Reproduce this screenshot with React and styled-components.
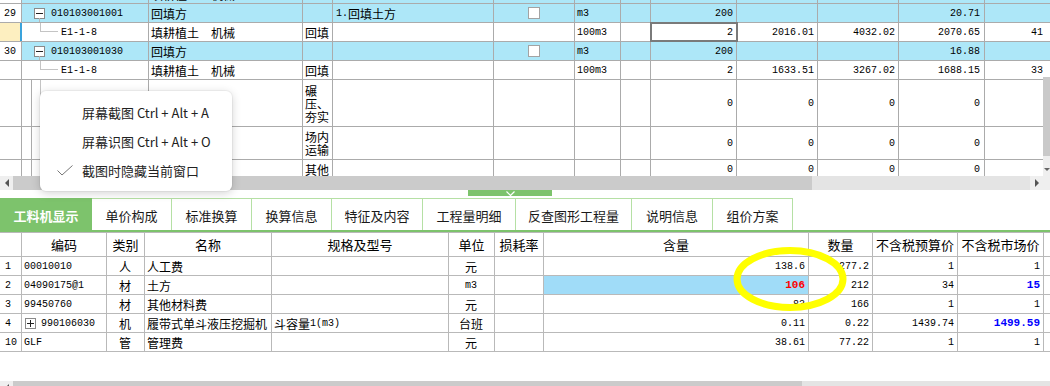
import React from "react";
import styled, { createGlobalStyle, css } from "styled-components";

const CJK = `"Noto Sans CJK SC", "Liberation Sans", sans-serif`;
const MONO = `"Liberation Mono", "Noto Sans CJK SC", monospace`;

const GlobalStyle = createGlobalStyle`
  *, *::before, *::after { box-sizing: border-box; }
  html, body { margin: 0; padding: 0; background: #fff; }
  body { font-family: ${CJK}; }
`;

// last two tracks: the visible slice of the clipped column, then the strip under the scrollbar
const TOP_COLS = "22px 127px 154px 30px 161px 81px 46px 30px 86px 81px 81px 86px 58px 1fr";
const BOTTOM_COLS = "22px 85px 38px 127px 177px 46px 49px 265px 64px 85px 86px 1fr";
const TOP_LINE = "#ababab";
const BOTTOM_LINE = "#b9b9b9";

const topRows = [
  { partial: true, blue: true, name: "填耕植土　机械" },
  { blue: true, no: "29", parent: true, code: "010103001001", name: "回填方", feature: true, check: true, unit: "m3", qty: "200", p3: "20.71" },
  { selected: true, child: true, code: "E1-1-8", name: "填耕植土　机械", kind: "回填", unit: "100m3", qty: "2", focus: true, p1: "2016.01", p2: "4032.02", p3: "2070.65", p4: "4141.30" },
  { blue: true, no: "30", parent: true, code: "010103001030", name: "回填方", check: true, unit: "m3", qty: "200", p3: "16.88" },
  { child: true, code: "E1-1-8", name: "填耕植土　机械", kind: "回填", unit: "100m3", qty: "2", p1: "1633.51", p2: "3267.02", p3: "1688.15", p4: "3376.30" },
  { h: 47, guide: true, kind: ["碾", "压、", "夯实"], qty: "0", p1: "0", p2: "0", p3: "0" },
  { h: 33, guide: true, kind: ["场内", "运输"], qty: "0", p1: "0", p2: "0", p3: "0" },
  { h: 20, guide: true, kind: ["其他"], qty: "0", p1: "0", p2: "0", p3: "0" },
];

const tabs = [
  { label: "工料机显示", w: 92, active: true },
  { label: "单价构成", w: 80 },
  { label: "标准换算", w: 80 },
  { label: "换算信息", w: 80 },
  { label: "特征及内容", w: 91 },
  { label: "工程量明细", w: 93 },
  { label: "反查图形工程量", w: 116 },
  { label: "说明信息", w: 81 },
  { label: "组价方案", w: 80 },
];

const headers = ["", "编码", "类别", "名称", "规格及型号", "单位", "损耗率", "含量", "数量", "不含税预算价", "不含税市场价", ""];

const materials = [
  { no: "1", code: "00010010", type: "人", name: "人工费", unit: "元", qty: "138.6", total: "277.2", budget: "1", market: "1" },
  { no: "2", code: "04090175@1", type: "材", name: "土方", unit: "m3", qty: "106", hot: true, total: "212", budget: "34", market: "15", marketBold: true },
  { no: "3", code: "99450760", type: "材", name: "其他材料费", unit: "元", qty: "83", total: "166", budget: "1", market: "1" },
  { no: "4", code: "990106030", expand: true, type: "机", name: "履带式单斗液压挖掘机", spec: "斗容量", specNum: "1(m3)", unit: "台班", qty: "0.11", total: "0.22", budget: "1439.74", market: "1499.59", marketBold: true },
  { no: "10", code: "GLF", type: "管", name: "管理费", unit: "元", qty: "38.61", total: "77.22", budget: "1", market: "1" },
];

const Screen = styled.div`
  position: relative;
  width: 1050px;
  height: 386px;
  overflow: hidden;
  background: #fff;
  font-family: ${CJK};
  font-size: 12px;
  color: #000;
  display: flex;
  flex-direction: column;
`;

const GridViewport = styled.div`
  position: relative;
  flex: none;
  height: 176px;
  overflow: hidden;
`;

const GridBody = styled.div`
  margin-top: -15px;
`;

const GridRow = styled.div`
  flex: none;
  display: grid;
  grid-template-columns: ${(p) => p.$cols};
  height: ${(p) => p.$h || 19}px;
  border-bottom: 1px solid ${(p) => p.$line};
  background: ${(p) => (p.$blue ? "#ade7f8" : "#fff")};
`;

const Cell = styled.div`
  display: flex;
  align-items: center;
  justify-content: ${(p) => ({ right: "flex-end", center: "center" }[p.$align] || "flex-start")};
  padding: 0 ${(p) => p.$pr ?? 3}px 0 ${(p) => p.$pl ?? 2}px;
  border-right: ${(p) => (p.$line ? `1px solid ${p.$line}` : "none")};
  background: ${(p) => p.$bg || "transparent"};
  white-space: nowrap;
  overflow: hidden;
  min-width: 0;
  ${(p) =>
    p.$focus &&
    css`
      position: relative;
      z-index: 1;
      outline: 2px solid #7a7a7a;
      outline-offset: -1px;
      overflow: visible;
    `}
  ${(p) =>
    p.$marker &&
    css`
      border-right-color: #3aa3dc;
      box-shadow: inset -1px 0 0 #3aa3dc;
    `}
`;

const Mono = styled.span`
  font-family: ${MONO};
  font-size: ${(p) => (p.$bold ? 11 : 10)}px;
  font-weight: ${(p) => (p.$bold ? "bold" : "normal")};
  color: ${(p) => p.$color || "inherit"};
`;

const Stack = styled.div`
  white-space: normal;
  line-height: 13px;
`;

const ExpandBox = styled.span`
  position: relative;
  flex: none;
  width: 11px;
  height: 11px;
  margin-right: ${(p) => p.$gap}px;
  border: 1px solid #8a8a8a;
  background: #fff;
  display: flex;
  align-items: center;
  justify-content: center;

  &::before {
    content: "";
    width: 7px;
    height: 1px;
    background: #222;
  }

  ${(p) =>
    p.$plus &&
    css`
      &::after {
        content: "";
        position: absolute;
        width: 1px;
        height: 7px;
        background: #222;
      }
    `}
`;

const Stem = styled.span`
  position: absolute;
  left: 4px;
  top: 100%;
  height: 5px;
  border-left: 1px solid #b8b8b8;
`;

const Guide = styled.span`
  flex: none;
  align-self: stretch;
  width: 9px;
  margin-left: 9px;
  border-left: 1px solid #ababab;
`;

const Connector = styled.span`
  flex: none;
  align-self: flex-start;
  width: 18px;
  height: ${(p) => p.$h}px;
  margin-right: 3px;
  border-left: 1px solid #c4c4c4;
  border-bottom: 1px solid #c4c4c4;
`;

const CheckBox = styled.span`
  width: 12px;
  height: 12px;
  border: 1px solid #a3a3a3;
  background: #fff;
`;

const VScroll = styled.div`
  position: absolute;
  right: 0;
  top: 77px;
  width: 7px;
  height: 99px;
  display: flex;
  flex-direction: column;
  background: #eeeeee;
`;

const VThumb = styled.div`
  height: 79px;
  background: #c9c9c9;
`;

const HScroll = styled.div`
  flex: none;
  display: flex;
  height: 14px;
  background: #e4e4e4;
`;

const ScrollArrow = styled.div`
  flex: none;
  width: ${(p) => p.$w || 13}px;
  height: ${(p) => (p.$h ? `${p.$h}px` : "auto")};
  background: #efefef;
  display: flex;
  align-items: center;
  justify-content: center;
`;

const Triangle = styled.span`
  width: 0;
  height: 0;
  ${(p) =>
    p.$dir === "left" &&
    css`
      border-top: 4px solid transparent;
      border-bottom: 4px solid transparent;
      border-right: 4px solid #555;
    `}
  ${(p) =>
    p.$dir === "right" &&
    css`
      border-top: 4px solid transparent;
      border-bottom: 4px solid transparent;
      border-left: 4px solid #555;
    `}
  ${(p) =>
    p.$dir === "down" &&
    css`
      border-left: 3px solid transparent;
      border-right: 3px solid transparent;
      border-top: 3px solid #666;
    `}
`;

const HThumb = styled.div`
  flex: none;
  width: ${(p) => p.$w}px;
  background: #cbcbcb;
`;

const Track = styled.div`
  flex: 1;
`;

const Splitter = styled.div`
  flex: none;
  height: 8px;
  padding-left: 468px;
`;

const SplitHandle = styled.div`
  width: 84px;
  height: 6px;
  background: #7dc36c;
  display: flex;
  justify-content: center;
  align-items: center;
`;

const TabBar = styled.div`
  flex: none;
  display: flex;
  height: 34px;
  border-bottom: 2px solid #7dc36c;
`;

const Tab = styled.div`
  flex: none;
  width: ${(p) => p.$w}px;
  display: flex;
  align-items: center;
  justify-content: center;
  padding-top: 2px;
  font-size: 13px;
  ${(p) =>
    p.$active
      ? css`
          background: #7dc36c;
          color: #fff;
          font-weight: bold;
        `
      : css`
          background: #fff;
          color: #1a1a1a;
          border-top: 1px solid #b5e0a4;
          border-right: 1px solid #b5e0a4;
        `}
`;

const HeaderRow = styled(GridRow)`
  height: 25px;
  border-top: 1px solid ${BOTTOM_LINE};
  font-size: 13px;
`;

const BottomGap = styled.div`
  flex: none;
  height: 29px;
`;

const Menu = styled.div`
  position: absolute;
  left: 40px;
  top: 91px;
  z-index: 5;
  width: 192px;
  height: 100px;
  padding-top: 7px;
  background: #fff;
  border-radius: 6px;
  box-shadow: 0 2px 10px rgba(0, 0, 0, 0.18), 0 0 0 1px rgba(0, 0, 0, 0.04);
`;

const MenuItem = styled.div`
  display: flex;
  align-items: center;
  height: 29px;
  padding-left: 17px;
  font-size: 13px;
  color: #222;
`;

const MenuIcon = styled.span`
  flex: none;
  width: 25px;
  display: flex;
  align-items: center;
`;

const Annotation = styled.svg`
  position: absolute;
  left: 728px;
  top: 242px;
  z-index: 4;
  pointer-events: none;
`;

const TopRow = ({ r }) => {
  const L = TOP_LINE;
  let code = null;
  if (r.parent) {
    code = (
      <Cell $line={L} $pl={12}>
        <ExpandBox $gap={6}>
          <Stem />
        </ExpandBox>
        <Mono>{r.code}</Mono>
      </Cell>
    );
  } else if (r.child) {
    code = (
      <Cell $line={L} $pl={18}>
        <Connector $h={9} />
        <Mono>{r.code}</Mono>
      </Cell>
    );
  } else if (r.guide) {
    code = (
      <Cell $line={L} $pl={0}>
        <Guide />
        <Connector $h={Math.floor((r.h - 1) / 2)} />
      </Cell>
    );
  } else {
    code = <Cell $line={L} />;
  }

  return (
    <GridRow $cols={TOP_COLS} $line={L} $h={r.h} $blue={r.blue}>
      <Cell $line={L} $pl={4} $bg={r.selected ? "#fdefc0" : "#fff"} $marker={r.selected}>
        <Mono>{r.no}</Mono>
      </Cell>
      {code}
      <Cell $line={L}>{r.name}</Cell>
      <Cell $line={L}>
        {Array.isArray(r.kind) ? (
          <Stack>
            {r.kind.map((k) => (
              <div key={k}>{k}</div>
            ))}
          </Stack>
        ) : (
          r.kind
        )}
      </Cell>
      <Cell $line={L} $pl={3}>
        {r.feature && (
          <>
            <Mono>1.</Mono>回填土方
          </>
        )}
      </Cell>
      <Cell $line={L} $align="center" $pl={0} $pr={0}>
        {r.check && <CheckBox />}
      </Cell>
      <Cell $line={L}>
        <Mono>{r.unit}</Mono>
      </Cell>
      <Cell $line={L} />
      <Cell $line={L} $align="right" $focus={r.focus}>
        <Mono>{r.qty}</Mono>
      </Cell>
      <Cell $line={L} $align="right">
        <Mono>{r.p1}</Mono>
      </Cell>
      <Cell $line={L} $align="right">
        <Mono>{r.p2}</Mono>
      </Cell>
      <Cell $line={L} $align="right" $pr={4}>
        <Mono>{r.p3}</Mono>
      </Cell>
      {/* column scrolled past the right edge: only its first digits show */}
      <Cell $pl={46} $pr={0}>
        <Mono>{r.p4}</Mono>
      </Cell>
      <Cell />
    </GridRow>
  );
};

const MaterialRow = ({ m }) => {
  const L = BOTTOM_LINE;
  return (
    <GridRow $cols={BOTTOM_COLS} $line={L}>
      <Cell $line={L} $pl={5}>
        <Mono>{m.no}</Mono>
      </Cell>
      <Cell $line={L} $pl={m.expand ? 3 : 2}>
        {m.expand && <ExpandBox $plus $gap={5} />}
        <Mono>{m.code}</Mono>
      </Cell>
      <Cell $line={L} $align="center">
        {m.type}
      </Cell>
      <Cell $line={L}>{m.name}</Cell>
      <Cell $line={L}>
        {m.spec}
        {m.specNum && <Mono>{m.specNum}</Mono>}
      </Cell>
      <Cell $line={L} $align="center">
        {m.unit === "m3" ? <Mono>m3</Mono> : m.unit}
      </Cell>
      <Cell $line={L} />
      <Cell $line={L} $align="right" $bg={m.hot ? "#a0dcf8" : undefined}>
        <Mono $bold={m.hot} $color={m.hot ? "#ff0000" : undefined}>
          {m.qty}
        </Mono>
      </Cell>
      <Cell $line={L} $align="right">
        <Mono>{m.total}</Mono>
      </Cell>
      <Cell $line={L} $align="right">
        <Mono>{m.budget}</Mono>
      </Cell>
      <Cell $line={L} $align="right">
        <Mono $bold={m.marketBold} $color={m.marketBold ? "#0000ff" : undefined}>
          {m.market}
        </Mono>
      </Cell>
      <Cell />
    </GridRow>
  );
};

export default function App() {
  return (
    <>
      <GlobalStyle />
      <Screen>
        <GridViewport>
          <GridBody>
            {topRows.map((r, i) => (
              <TopRow key={i} r={r} />
            ))}
          </GridBody>
          <VScroll>
            <VThumb />
            <Track />
            <ScrollArrow $w={7} $h={13}>
              <Triangle $dir="down" />
            </ScrollArrow>
          </VScroll>
        </GridViewport>

        <HScroll>
          <ScrollArrow>
            <Triangle $dir="left" />
          </ScrollArrow>
          <HThumb $w={799} />
          <Track />
          <ScrollArrow>
            <Triangle $dir="right" />
          </ScrollArrow>
          <ScrollArrow $w={7} />
        </HScroll>

        <Splitter>
          <SplitHandle>
            <svg width="9" height="5" viewBox="0 0 9 5">
              <polyline points="0.5,0.5 4.5,4.5 8.5,0.5" fill="none" stroke="#fff" strokeWidth="1.2" />
            </svg>
          </SplitHandle>
        </Splitter>

        <TabBar>
          {tabs.map((t) => (
            <Tab key={t.label} $w={t.w} $active={t.active}>
              {t.label}
            </Tab>
          ))}
        </TabBar>

        <HeaderRow $cols={BOTTOM_COLS} $line={BOTTOM_LINE}>
          {headers.map((h, i) => (
            <Cell key={i} $line={i < headers.length - 1 ? BOTTOM_LINE : undefined} $align="center" $pl={0} $pr={0}>
              {h}
            </Cell>
          ))}
        </HeaderRow>
        {materials.map((m) => (
          <MaterialRow key={m.no} m={m} />
        ))}
        <BottomGap />
        <HScroll>
          <ScrollArrow>
            <Triangle $dir="left" />
          </ScrollArrow>
          <HThumb $w={789} />
          <Track />
        </HScroll>

        <Menu>
          <MenuItem>
            <MenuIcon />
            屏幕截图 Ctrl + Alt + A
          </MenuItem>
          <MenuItem>
            <MenuIcon />
            屏幕识图 Ctrl + Alt + O
          </MenuItem>
          <MenuItem>
            <MenuIcon>
              <svg width="16" height="11" viewBox="0 0 16 11">
                <polyline points="0.5,5.5 5,10 15.5,0.5" fill="none" stroke="#777" strokeWidth="1" />
              </svg>
            </MenuIcon>
            截图时隐藏当前窗口
          </MenuItem>
        </Menu>

        <Annotation width="124" height="74" viewBox="0 0 124 74">
          <ellipse cx="62" cy="37" rx="53" ry="28.5" fill="none" stroke="#ffff00" strokeWidth="7" />
        </Annotation>
      </Screen>
    </>
  );
}
